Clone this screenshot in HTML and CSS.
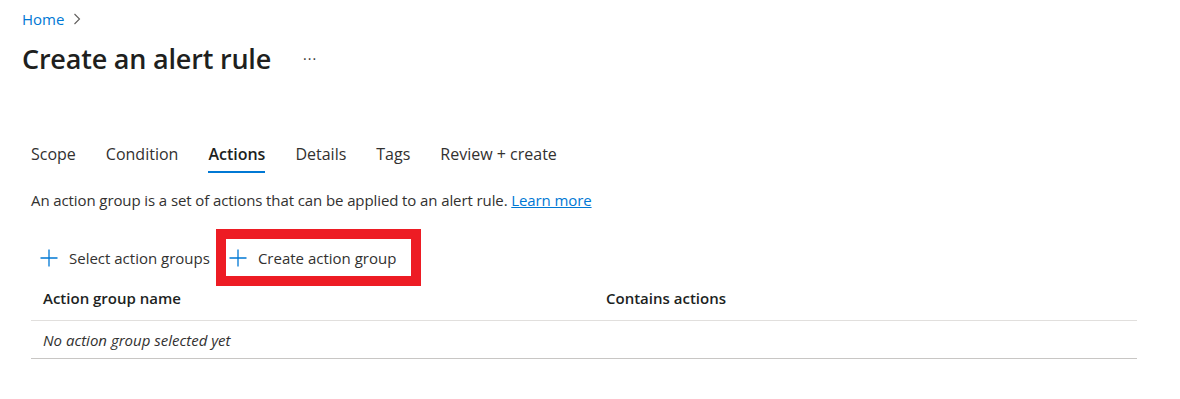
FILE: index.html
```html
<!DOCTYPE html>
<html lang="en">
<head>
  <meta charset="UTF-8" />
  <title>Create an alert rule</title>
  <link rel="stylesheet" href="styles.css">
</head>
<body>

  <div class="breadcrumb">
    <a href="#">Home</a>
    <svg class="chev" width="8" height="12" viewBox="0 0 8 12"><path d="M1.5 1 L6.5 6 L1.5 11" fill="none" stroke="#605e5c" stroke-width="1.1"/></svg>
  </div>

  <div class="title-row">
    <h1 class="title">Create an alert rule</h1>
    <span class="more">&middot;&middot;&middot;</span>
  </div>

  <div class="tabs">
    <span class="tab">Scope</span>
    <span class="tab">Condition</span>
    <span class="tab active">Actions</span>
    <span class="tab">Details</span>
    <span class="tab">Tags</span>
    <span class="tab">Review + create</span>
  </div>

  <p class="desc">An action group is a set of actions that can be applied to an alert rule. <a href="#">Learn more</a></p>

  <div class="toolbar">
    <button class="cmd">
      <svg width="18" height="18" viewBox="0 0 18 18"><path d="M9 0.5 V17.5 M0.5 9 H17.5" stroke="#0078d4" stroke-width="1.3" fill="none"/></svg>
      Select action groups
    </button>
    <button class="cmd boxed">
      <svg width="18" height="18" viewBox="0 0 18 18"><path d="M9 0.5 V17.5 M0.5 9 H17.5" stroke="#0078d4" stroke-width="1.3" fill="none"/></svg>
      Create action group
    </button>
  </div>

  <div class="grid">
    <div class="grid-head">
      <div class="col-name">Action group name</div>
      <div class="col-actions">Contains actions</div>
    </div>
    <div class="grid-row">
      <div class="col-name empty">No action group selected yet</div>
    </div>
  </div>

</body>
</html>
```

FILE: styles.css
```css
body {
  font-family: 'Open Sans', 'Noto Sans', sans-serif;
  background-color: #fff;
  color: #323130;
  margin: 0;
  padding: 0;
}
a {
  color: #0078d4;
}

.breadcrumb {
  display: flex;
  align-items: center;
  gap: 9px;
  padding: 8px 0 0 22px;
  height: 22px;
  font-size: 15px;
}
.breadcrumb a {
  text-decoration: none;
}

.title-row {
  display: flex;
  align-items: center;
  padding-left: 22px;
  margin-top: 8px;
  height: 40px;
}
.title {
  margin: 0;
  font-size: 27px;
  font-weight: 600;
  letter-spacing: -0.2px;
  color: #201f1e;
}
.more {
  margin-left: 32px;
  font-size: 14px;
  color: #323130;
  letter-spacing: 1px;
}

.tabs {
  display: flex;
  gap: 30px;
  padding-left: 31px;
  margin-top: 65px;
  font-size: 16px;
}
.tab {
  padding-bottom: 6px;
  border-bottom: 2px solid transparent;
}
.tab.active {
  font-weight: 600;
  border-bottom-color: #0078d4;
  color: #201f1e;
}

.desc {
  margin: 17px 0 0 31px;
  font-size: 15px;
  letter-spacing: -0.1px;
}

.toolbar {
  display: flex;
  align-items: center;
  padding-left: 30px;
  margin-top: 19px;
}
.cmd {
  display: flex;
  align-items: center;
  gap: 11px;
  font-family: inherit;
  font-size: 15px;
  color: #323130;
  background: none;
  border: none;
  padding: 0 6px 0 10px;
  height: 37px;
  cursor: pointer;
}
.cmd.boxed {
  border: 10px solid #ed1c24;
  height: 57px;
  width: 205px;
  padding: 0 0 0 3px;
}

.grid {
  margin: 0 0 0 31px;
  width: 1106px;
  font-size: 15px;
}
.grid-head {
  display: flex;
  height: 35px;
  padding-bottom: 10px;
  box-sizing: border-box;
  align-items: center;
  font-weight: 600;
  color: #201f1e;
  border-bottom: 1px solid #e1dfdd;
}
.grid-row {
  display: flex;
  height: 38px;
  box-sizing: border-box;
  align-items: center;
  border-bottom: 1px solid #c8c6c4;
}
.col-name {
  width: 575px;
  box-sizing: border-box;
  padding-left: 12px;
}
.empty {
  font-style: italic;
}
```
